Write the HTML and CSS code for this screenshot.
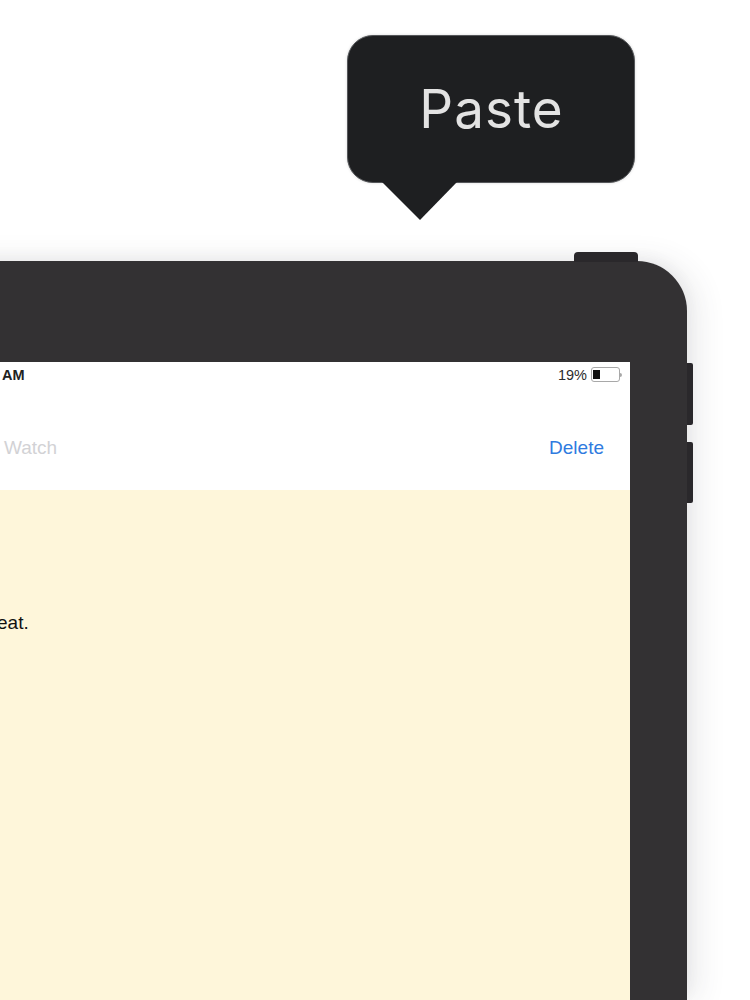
FILE: index.html
```html
<!DOCTYPE html>
<html lang="en">
<head>
<meta charset="utf-8">
<title>Paste</title>
<link rel="stylesheet" href="styles.css">
</head>
<body>
<main class="stage">
  <div class="popup">
    <span class="popup-label">Paste</span>
    <svg class="popup-tail" width="76" height="39" viewBox="0 0 76 39" aria-hidden="true"><path d="M0 0H75L38 38Z"/></svg>
  </div>
  <section class="tablet">
    <span class="btn-top"></span>
    <span class="btn-side btn-up"></span>
    <span class="btn-side btn-down"></span>
    <div class="screen">
      <div class="status">
        <span class="time">AM</span>
        <span class="battery-group">
          <span>19%</span>
          <span class="battery"><span class="battery-level"></span></span>
          <span class="battery-tip"></span>
        </span>
      </div>
      <nav class="nav">
        <span class="watch">Watch</span>
        <span class="delete">Delete</span>
      </nav>
      <div class="note"><p class="note-text">eat.</p></div>
    </div>
  </section>
</main>
</body>
</html>
```
FILE: styles.css
```css
* { box-sizing: border-box; }
html, body { margin: 0; height: 1000px; overflow: hidden; background: #fff; }
body { font-family: "Liberation Sans", Arial, sans-serif; }
.stage { display: flex; flex-direction: column; height: 1000px; padding-top: 35px; }

.popup {
  position: relative;
  display: flex;
  align-items: center;
  justify-content: center;
  width: 288px;
  height: 148px;
  margin-left: 347px;
  background: #1e1f21;
  border: 1px solid #55575a;
  border-radius: 26px;
  box-shadow: 0 0 3px rgba(0,0,0,.15);
}
.popup-label {
  font-family: Inter, "Noto Sans", sans-serif;
  font-size: 53px;
  line-height: 1;
  letter-spacing: 1px;
  color: #e3e3e3;
  margin-left: 1px;
}
.popup-tail { position: absolute; left: 34px; top: 146px; fill: #1e1f21; }

.tablet {
  position: relative;
  display: flex;
  flex: 1;
  width: 787px;
  margin-left: -100px;
  margin-top: 78px;
  padding: 101px 57px 0 100px;
  background: #333133;
  border-radius: 50px 50px 0 0;
  box-shadow: 10px 0 30px rgba(60,60,70,.11), 0 -4px 14px rgba(60,60,70,.05);
}
.btn-top {
  position: absolute;
  right: 49px;
  top: -9px;
  width: 64px;
  height: 10px;
  background: #2a282b;
  border-radius: 4px 4px 0 0;
}
.btn-side {
  position: absolute;
  right: -6px;
  width: 6px;
  background: #2a282b;
  border-radius: 0 2px 2px 0;
}
.btn-up { top: 102px; height: 62px; }
.btn-down { top: 181px; height: 61px; }

.screen { display: flex; flex-direction: column; flex: 1; background: #fff; }
.status {
  display: flex;
  justify-content: space-between;
  align-items: center;
  height: 25px;
  padding: 0 8px 0 2px;
  font-size: 14.5px;
  color: #2b2b2b;
}
.time { font-weight: 700; color: #222; }
.battery-group { display: flex; align-items: center; gap: 4px; }
.battery {
  display: flex;
  width: 29px;
  height: 15px;
  padding: 2px 1px;
  border: 1px solid #a8a8a8;
  border-radius: 3px;
}
.battery-level { width: 7px; background: #111; }
.battery-tip { width: 2px; height: 4px; margin-left: -4px; background: #a8a8a8; border-radius: 0 2px 2px 0; }

.nav {
  display: flex;
  justify-content: space-between;
  align-items: center;
  height: 103px;
  padding: 47px 26px 29px 4px;
  font-size: 19px;
}
.watch { color: #d2d2d5; }
.delete { color: #2f7bdf; }

.note { flex: 1; background: #fef6da; padding-top: 121px; }
.note-text { margin: 0 0 0 -3px; font-size: 19px; line-height: 24px; color: #111; }
```
